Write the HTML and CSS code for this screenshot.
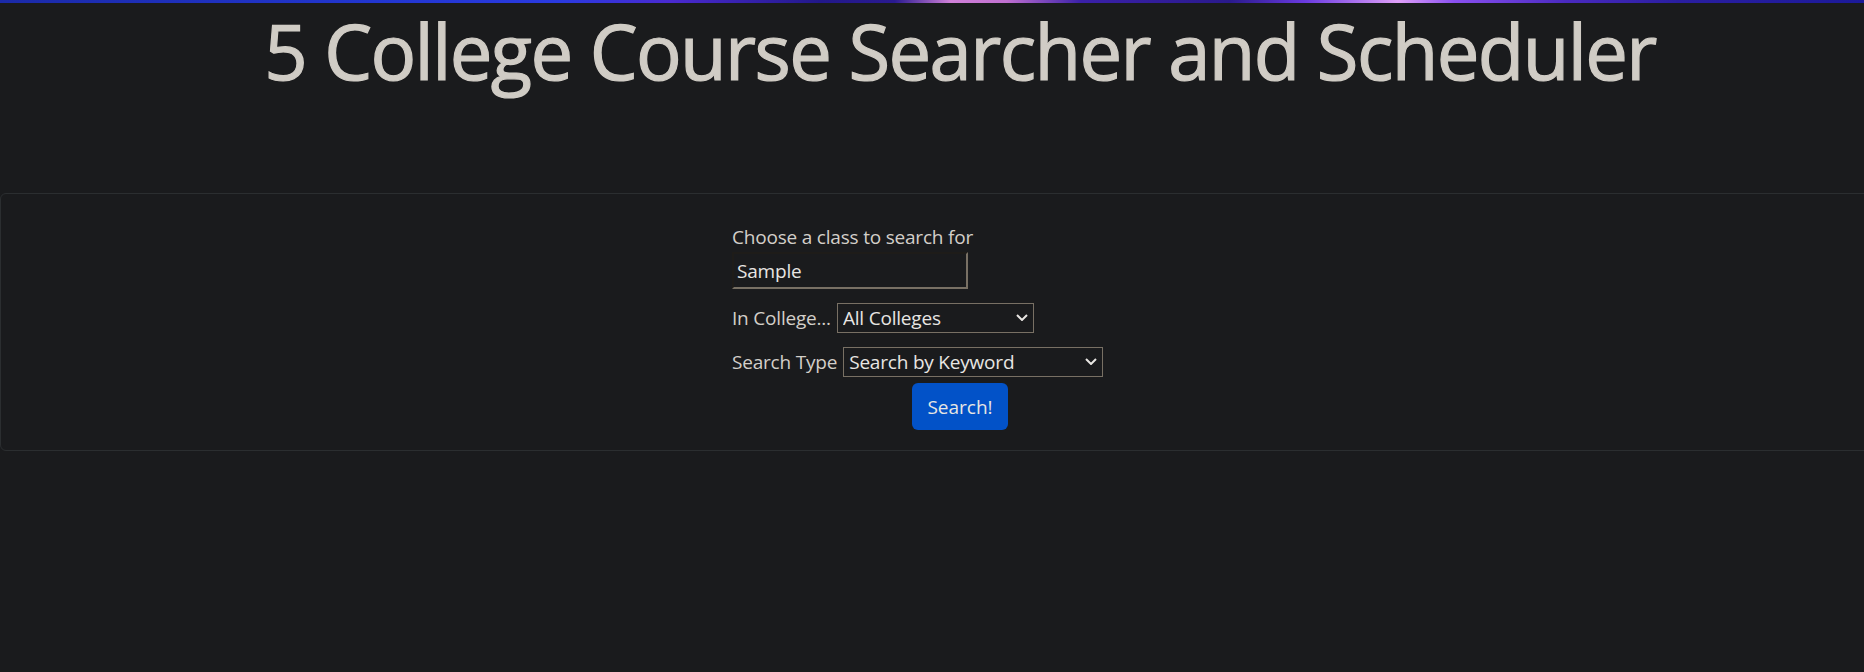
FILE: index.html
```html
<!DOCTYPE html>
<html lang="en">
<head>
<meta charset="utf-8">
<title>5 College Course Searcher and Scheduler</title>
<link rel="stylesheet" href="styles.css">
</head>
<body>
<div class="topbar"></div>
<div class="page">
  <h1 class="title">5 College Course Searcher and Scheduler</h1>
  <section class="card">
    <form class="search-form">
      <label class="field-label" for="q">Choose a class to search for</label>
      <input class="text-input" id="q" type="text" value="Sample">
      <div class="row row-college">
        <label class="field-label" for="college">In College...</label>
        <span class="select-wrap select-college">
          <select class="select" id="college">
            <option>All Colleges</option>
          </select>
          <svg class="chevron" viewBox="0 0 12 7" width="12" height="7"><path d="M1 1l5 5 5-5" fill="none" stroke="#e8e6e3" stroke-width="2"/></svg>
        </span>
      </div>
      <div class="row row-type">
        <label class="field-label" for="type">Search Type</label>
        <span class="select-wrap select-type">
          <select class="select" id="type">
            <option>Search by Keyword</option>
          </select>
          <svg class="chevron" viewBox="0 0 12 7" width="12" height="7"><path d="M1 1l5 5 5-5" fill="none" stroke="#e8e6e3" stroke-width="2"/></svg>
        </span>
      </div>
      <div class="btn-row">
        <button type="button" class="btn-search">Search!</button>
      </div>
    </form>
  </section>
</div>
</body>
</html>
```
FILE: styles.css
```css
html, body {
  margin: 0;
  padding: 0;
  background: #1a1b1d;
  overflow: hidden;
}
body {
  font-family: "Open Sans", "Noto Sans", "Liberation Sans", sans-serif;
  color: #d3cfc9;
  height: 672px;
}
.topbar {
  height: 3px;
  background: linear-gradient(90deg, #1b2aa8 0%, #2236d0 20%, #2a3ae0 30%, #4a2ad0 36%, #22188a 44%, #2a1a90 48%, #d080d8 51%, #c070d0 54%, #3a20a8 58%, #2a1a8c 66%, #6a3ae0 70%, #e0a0f8 75%, #8a50f0 78%, #4a2ac0 84%, #2a1ea0 90%, #1c1a9a 100%);
}
.page {
  width: 1920px;
}
.title {
  margin: 0;
  padding-top: 2px;
  font-size: 76px;
  line-height: 92px;
  font-weight: 400;
  text-align: center;
  color: #d0ccc5;
  letter-spacing: -1.6px;
  -webkit-text-stroke: 1.2px #d0ccc5;
}
.card {
  margin-top: 96px;
  border: 1px solid #2b2e30;
  border-radius: 6px;
  padding: 28px 0 20px;
}
.search-form {
  width: 456px;
  margin: 0 auto;
  display: flex;
  flex-direction: column;
  align-items: flex-start;
}
.field-label {
  font-size: 19px;
  line-height: 30px;
  letter-spacing: -0.2px;
  color: #d3cfc9;
}
.text-input {
  box-sizing: border-box;
  width: 236px;
  height: 37px;
  margin: 0;
  padding: 0 3px;
  font-family: inherit;
  font-size: 19px;
  letter-spacing: -0.2px;
  color: #e8e6e3;
  background: #1a1b1d;
  border: 2px solid;
  border-color: #1e1c19 #787064 #787064 #1e1c19;
  outline: none;
}
.row {
  display: flex;
  align-items: center;
  gap: 6px;
  margin-top: 14px;
  height: 30px;
}
.select-wrap {
  position: relative;
  display: inline-block;
  height: 30px;
}
.select {
  box-sizing: border-box;
  -webkit-appearance: none;
  appearance: none;
  height: 30px;
  margin: 0;
  padding: 0 0 0 5px;
  font-family: inherit;
  font-size: 19px;
  letter-spacing: -0.2px;
  line-height: 28px;
  color: #e8e6e3;
  background: #1a1b1d;
  border: 1px solid #787064;
  border-radius: 0;
  outline: none;
}
.select-college .select { width: 197px; }
.select-type .select { width: 260px; }
.chevron {
  position: absolute;
  right: 6px;
  top: 11px;
  pointer-events: none;
}
.btn-row {
  align-self: stretch;
  display: flex;
  justify-content: center;
  margin-top: 6px;
}
.btn-search {
  width: 96px;
  height: 47px;
  padding: 0;
  font-family: inherit;
  font-size: 19px;
  color: #e8e6e3;
  background: #0252c8;
  border: none;
  border-radius: 6px;
}
```
